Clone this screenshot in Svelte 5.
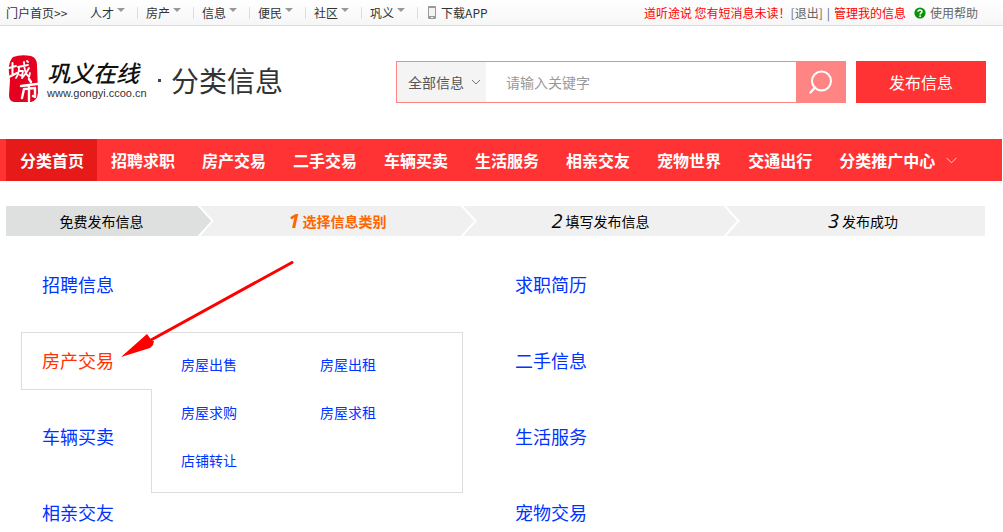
<script>
  const areas = ['人才', '房产', '信息', '便民', '社区', '巩义'];
  const nav = ['分类首页', '招聘求职', '房产交易', '二手交易', '车辆买卖', '生活服务', '相亲交友', '宠物世界', '交通出行'];
  const steps = [
    { num: '', text: '免费发布信息', state: 'done' },
    { num: '1', text: '选择信息类别', state: 'current' },
    { num: '2', text: '填写发布信息', state: '' },
    { num: '3', text: '发布成功', state: 'last' }
  ];
  const categories = ['招聘信息', '求职简历', '房产交易', '二手信息', '车辆买卖', '生活服务', '相亲交友', '宠物交易'];
  const sub = ['房屋出售', '房屋出租', '房屋求购', '房屋求租', '店铺转让'];
  const active = '房产交易';
</script>

<div class="page">
  <div class="topbar">
    <a class="home" href="#home">门户首页&gt;&gt;</a>
    {#each areas as area}
      <a class="area" href="#area">{area}<i class="caret"></i></a>
      <span class="bar"></span>
    {/each}
    <a class="app" href="#app">
      <svg width="8" height="13" viewBox="0 0 8 13"><rect width="8" height="13" rx="1" fill="#999" /><rect x="1" y="2" width="6" height="8" fill="#f4f4f4" /><rect x="3" y="11" width="2" height="1" fill="#fff" /></svg>下载APP
    </a>
    <div class="user">
      <a class="red" href="#messages">道听途说 您有短消息未读！</a><a href="#logout">[退出]</a>
      <span class="pipe">|</span>
      <a class="red" href="#manage">管理我的信息</a>
      <a class="help" href="#help">
        <svg width="12" height="12" viewBox="0 0 12 12"><circle cx="6" cy="6" r="5.6" fill="#079207" /><path d="M4 4.8C4 2.5 8 2.4 8 4.6C8 6 6.1 5.8 6.1 7.4" fill="none" stroke="#fff" stroke-width="1.5" /><circle cx="6.1" cy="9.2" r=".9" fill="#fff" /></svg>使用帮助
      </a>
    </div>
  </div>

  <header>
    <a class="logo" href="#home">
      <svg class="seal" width="32" height="48" viewBox="0 0 32 48">
        <path d="M5 2Q13-1 23 1Q29 3 29 10L30 38Q29 46 23 47L6 47Q1 46 1 40L2 25L1 18Q0 7 5 2Z" fill="#e60020" />
        <g fill="none" stroke="#fff" stroke-linecap="round" stroke-linejoin="round">
          <path d="M1 13L8 11M4.500 8V20M1 22L9 18" stroke-width="2" />
          <path d="M10 12L20 10M11 12Q11 19 8 23M11 16H15L14 21L12 20M16 7Q16 18 21 22L22 18M21 13Q18 19 14 23M19 6L20 7" stroke-width="1.800" />
          <path d="M21 24L23 27M13 31L29 29M16 34L14 43M16 34L27 33V42L25 41M21 30V46" stroke-width="2.400" />
        </g>
      </svg>
      <span class="brand"><b>巩义在线</b><small>www.gongyi.ccoo.cn</small></span>
    </a>
    <h1><span class="dot"></span>分类信息</h1>
    <form class="search">
      <button class="scope" type="button">全部信息
        <svg width="10" height="6" viewBox="0 0 10 6"><path d="M1 1L5 5L9 1" fill="none" stroke="#777" /></svg>
      </button>
      <input type="text" aria-label="关键字" placeholder="请输入关键字" />
      <button class="go" type="button" aria-label="搜索">
        <svg width="24" height="24" viewBox="0 0 24 24"><circle cx="12.500" cy="11" r="9.500" fill="none" stroke="#fff" stroke-width="2" /><path d="M6 17.500L1.500 22.500" stroke="#fff" stroke-width="2.400" stroke-linecap="round" /></svg>
      </button>
    </form>
    <button class="publish" type="button">发布信息</button>
  </header>

  <nav>
    {#each nav as item, i}
      <a class:on={i === 0} href="#nav">{item}</a>
    {/each}
    <a href="#promo">分类推广中心<svg width="11" height="7" viewBox="0 0 11 7"><path d="M.5 .8L5.500 5.800L10.500 .8" fill="none" stroke="#fff" stroke-opacity=".75" /></svg></a>
  </nav>

  <ol class="steps">
    {#each steps as s}
      <li class={s.state}>
        {#if s.num}<em>{s.num}</em>{/if}<span>{s.text}</span>
        {#if s.state !== 'last'}
          <svg width="18" height="30" viewBox="0 0 18 30"><path d="M0 0H2L15.500 15L2 30H0Z" fill={s.state === 'done' ? '#dde0df' : '#f0f0f0'} /><path d="M1 -1L15.500 15L1 31" fill="none" stroke="#fff" stroke-width="2" /></svg>
        {/if}
      </li>
    {/each}
  </ol>

  <main>
    {#each categories as c}
      <div class="cell">
        <a class="cat" class:active={c === active} href="#category">{c}</a>
        {#if c === active}
          <div class="panel">
            {#each sub as name}<a href="#sub">{name}</a>{/each}
          </div>
        {/if}
      </div>
    {/each}
    <svg class="pointer" width="174" height="98" viewBox="0 0 174 98"><path d="M171 1.500L30 79" stroke="#f00" stroke-width="3" stroke-linecap="round" /><path d="M0 96L26 73L31 80L33 80L32 84L29 87Z" fill="#f00" /></svg>
  </main>
</div>

<style>
  :global(body) { margin: 0; background: #fff; }
  .page { font: 12px/24px "Noto Sans CJK SC", sans-serif; color: #333; overflow: hidden; }
  a { color: inherit; text-decoration: none; white-space: nowrap; }
  svg { display: block; flex: none; }
  button, input { font: inherit; border: 0; padding: 0; margin: 0; border-radius: 0; }

  .topbar { display: flex; align-items: center; height: 25px; padding: 0 25px 0 6px; border-bottom: 1px solid #ddd; background: linear-gradient(#fff, #f6f6f6); }
  .home { width: 84px; }
  .area { display: flex; gap: 3px; }
  .caret { width: 0; height: 0; margin-top: 7px; border: 4px solid transparent; border-top-color: #999; border-bottom: 0; }
  .bar { width: 1px; height: 12px; margin: 0 8px 0 12px; background: #ddd; }
  .app { display: flex; align-items: center; gap: 5px; margin-left: 2px; }
  .user { display: flex; align-items: center; margin-left: auto; color: #666; }
  .pipe { margin: 0 4px; }
  .red { color: #f00; }
  .help { display: flex; align-items: center; gap: 4px; margin-left: 8px; }

  header { display: flex; align-items: center; height: 42px; padding: 35px 17px 36px 8px; }
  .logo { display: flex; align-items: center; gap: 7px; width: 148px; padding-bottom: 6px; }
  .brand { display: flex; flex-direction: column; color: #111; }
  .brand b { font: italic 500 23px/28px "Noto Sans CJK SC", sans-serif; }
  .brand small { font: 11px/14px "Liberation Sans", sans-serif; color: #333; }
  h1 { flex: 1; display: flex; align-items: center; gap: 10px; margin: 0; padding-bottom: 4px; font-size: 28px; line-height: 42px; font-weight: 400; white-space: nowrap; }
  .dot { width: 3px; height: 3px; margin-left: 2px; background: #444; }
  .search { display: flex; width: 450px; height: 42px; box-sizing: border-box; border: 1px solid #ff8585; font-size: 14px; line-height: 40px; }
  .scope { display: flex; align-items: center; justify-content: flex-end; gap: 7px; width: 89px; padding-right: 5px; background: #f4f4f4; color: #555; }
  .search input { flex: 1; min-width: 0; padding: 0 20px; outline: 0; }
  .search input::placeholder { color: #999; opacity: 1; }
  .go { display: grid; place-items: center; width: 49px; background: #ff8585; }
  .publish { width: 130px; height: 42px; margin-left: 10px; background: #f33; color: #fff; font-size: 16px; }

  nav { display: flex; height: 42px; padding-left: 6px; margin-right: 1px; background: #f33; color: #fff; font-size: 16px; line-height: 42px; font-weight: 700; }
  nav a { display: flex; align-items: center; gap: 11px; padding: 0 13px 0 14px; }
  nav .on { background: #e71a1a; }

  .steps { display: grid; grid-template-columns: 191fr 263fr 263fr 262fr; margin: 25px 18px 0 6px; padding: 0; list-style: none; background: #f0f0f0; color: #000; font-size: 14px; line-height: 30px; }
  .steps li { position: relative; display: flex; justify-content: center; box-sizing: border-box; height: 30px; padding-left: 18px; }
  .steps svg { position: absolute; right: -18px; top: 0; }
  .steps em { margin-right: 3px; font: italic 20px/30px "Open Sans", sans-serif; }
  .steps .done { padding-left: 0; background: #dde0df; }
  .current { color: #f60; font-weight: 700; }
  .steps .current em { font-weight: 700; }

  main { position: relative; display: grid; grid-template-columns: 473px 1fr; grid-auto-rows: 58px; row-gap: 18px; padding: 20px 0 0 21px; }
  .cell { position: relative; }
  .cat { display: block; box-sizing: border-box; width: 131px; height: 58px; padding-left: 21px; font-size: 18px; line-height: 56px; color: #03f; }
  .active { position: relative; z-index: 2; padding-left: 20px; border: 1px solid #ddd; border-right: 0; background: #fff; color: #f30; line-height: 54px; }
  .panel { position: absolute; z-index: 1; left: 130px; top: 0; display: grid; grid-template-columns: 139px 139px; grid-auto-rows: 48px; box-sizing: border-box; width: 312px; padding: 7px 0 8px 29px; border: 1px solid #ddd; background: #fff; color: #03f; font-size: 14px; line-height: 48px; }
  .pointer { position: absolute; z-index: 3; left: 121px; top: 25px; }
</style>
